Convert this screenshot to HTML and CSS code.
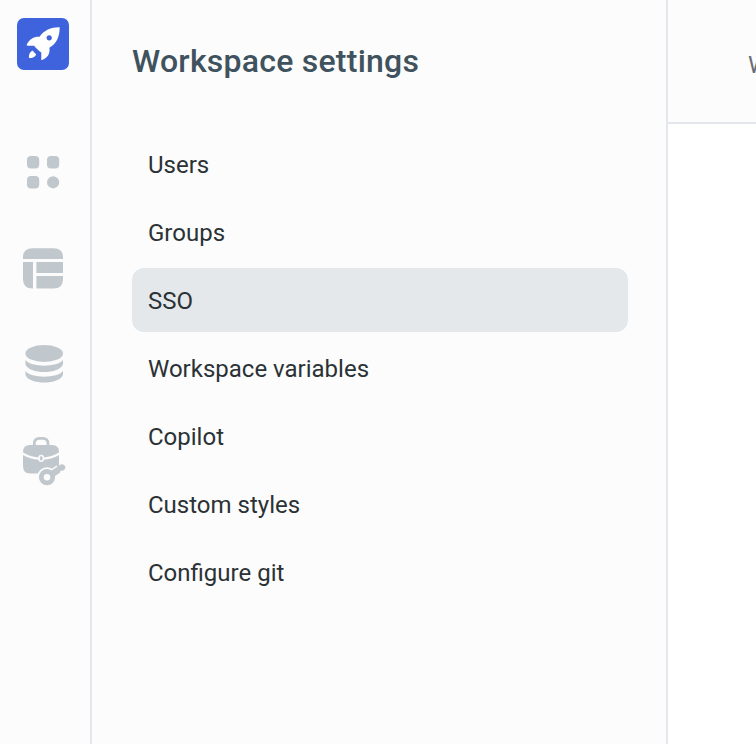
FILE: index.html
```
<!DOCTYPE html>
<html lang="en">
<head>
<meta charset="utf-8">
<title>Workspace settings</title>
<link rel="stylesheet" href="styles.css">
</head>
<body>
<div class="app">
  <nav class="rail">
    <a class="logo" aria-label="Home">
      <svg width="52" height="52" viewBox="0 0 52 52" fill="#fff">
        <path fill-rule="evenodd" d="M42.7 9.3C35 9 27 12 22.5 18.8C17 18.5 12.5 21 9.7 26.8Q9.7 27.7 10.7 27.7H17.3L18 29L22.5 33.2L24.3 34.5V41.5Q24.4 42.3 25.2 42C30.5 40 33.3 36 32.4 29.8C39.5 25.8 42.6 19 42.7 9.3ZM32.2 17.2A2.6 2.6 0 1 1 32.2 22.4A2.6 2.6 0 1 1 32.2 17.2Z"/>
        <path d="M15.5 32.6C13 34 11.8 36.5 11.9 39.5Q12 40.2 12.8 40.1C15.5 40.1 17.9 38.9 19.2 36.4Z"/>
      </svg>
    </a>
    <a class="rail-item" aria-label="Apps">
      <svg width="44" height="52" viewBox="0 0 44 52">
        <rect x="5" y="10" width="12.2" height="12.5" rx="4"/>
        <rect x="25" y="10" width="12.2" height="12.5" rx="4"/>
        <rect x="5" y="30" width="12.2" height="12.5" rx="4"/>
        <circle cx="31.1" cy="36.3" r="6.1"/>
      </svg>
    </a>
    <a class="rail-item" aria-label="Database">
      <svg width="44" height="52" viewBox="0 0 44 52">
        <path d="M1 17V15.5Q1 6.2 10.3 6.2H31.7Q41 6.2 41 15.5V17H1ZM1 20H11V46.5H10.3Q1 46.5 1 37.2ZM14.4 20H41V31H14.4ZM14.4 34H41V37.2Q41 46.5 31.7 46.5H14.4Z"/>
      </svg>
    </a>
    <a class="rail-item" aria-label="Data sources">
      <svg width="44" height="52" viewBox="0 0 44 52">
        <ellipse cx="22.2" cy="15.5" rx="18.8" ry="8.5"/>
        <path d="M3.4 22C9 29.5 35.4 29.5 41 22V26C38 36.7 6.4 36.7 3.4 26ZM3.4 33C9 40.5 35.4 40.5 41 33V36.8C38 47.2 6.4 47.2 3.4 36.8Z"/>
      </svg>
    </a>
    <a class="rail-item" aria-label="Workspace constants">
      <svg width="44" height="52" viewBox="0 0 44 52">
        <path class="line" d="M12.3 10V7.5Q12.3 2.3 17.5 2.3H20.7Q26 2.3 26 7.5V10"/>
        <path d="M8 9H30Q37 9 37 16V30L32 37.5H8Q1 37.5 1 30V16Q1 9 8 9Z"/>
        <path class="gap" d="M.5 17.5Q9 22.7 19 22.7T37.5 17.5"/>
        <rect class="clasp" x="17.1" y="19.4" width="4.2" height="5.8" rx="2.1"/>
        <path class="key-gap" d="M25 41.2L37 33"/>
        <circle class="key-gap" cx="25" cy="41.2" r="5.7"/>
        <path d="M28.5 35.3L38.6 28.4Q41.6 27.6 43.2 30.1V32.8L40.4 35L38.9 34.4L37.6 37L31.5 41.1Z"/>
        <circle class="key" cx="25" cy="41.2" r="5.7"/>
      </svg>
    </a>
  </nav>
  <aside class="sidebar">
    <h1>Workspace settings</h1>
    <ul class="menu">
      <li>Users</li>
      <li>Groups</li>
      <li class="active">SSO</li>
      <li>Workspace variables</li>
      <li>Copilot</li>
      <li>Custom styles</li>
      <li>Configure git</li>
    </ul>
  </aside>
  <main class="content">
    <header>Workspace settings</header>
  </main>
</div>
</body>
</html>
```
FILE: styles.css
```
* { box-sizing: border-box; }
body { margin: 0; background: #fff; font-family: Roboto, "Liberation Sans", sans-serif; }
.app { display: flex; width: 100vw; height: 100vh; overflow: hidden; }
.rail { width: 92px; flex: none; padding: 18px 0 0 17px; background: #fcfcfc; border-right: 2px solid #e4e7eb; }
.logo { display: block; width: 52px; height: 52px; margin-bottom: 76px; border-radius: 7px; background: #3e63dd; }
.rail svg { display: block; }
.rail-item { display: block; width: 44px; height: 52px; margin: 0 0 44px 5px; fill: #c1c8cd; }
.rail-item:nth-child(4) { margin-bottom: 46px; }
.line { fill: none; stroke: #c1c8cd; stroke-width: 2.7; }
.gap { fill: none; stroke: #fcfcfc; stroke-width: 2.3; }
.clasp { fill: #c1c8cd; stroke: #fcfcfc; stroke-width: 1.5; }
.key { fill: #fcfcfc; stroke: #c1c8cd; stroke-width: 4.8; }
.key-gap { fill: #fcfcfc; stroke: #fcfcfc; stroke-width: 8.5; }
.sidebar { width: 576px; flex: none; padding: 41px 38px 0 40px; background: #fcfcfc; border-right: 2px solid #e4e7eb; }
h1 { margin: 0 0 51px; color: #3f525d; font-size: 32px; font-weight: 500; letter-spacing: 0.24px; line-height: 40px; white-space: nowrap; }
.menu { display: flex; flex-direction: column; gap: 4px; margin: 0; padding: 0; list-style: none; }
.menu li { height: 64px; padding: 0 16px; border-radius: 12px; color: #2b3236; font-size: 24px; line-height: 67px; white-space: nowrap; }
.menu .active { background: #e4e8eb; }
.content { flex: 1; min-width: 0; }
header { height: 124px; padding: 45px 0 0 80px; overflow: hidden; background: #fcfcfc; border-bottom: 2px solid #e4e7eb; color: #687076; font-size: 24px; line-height: 40px; white-space: nowrap; }
```
